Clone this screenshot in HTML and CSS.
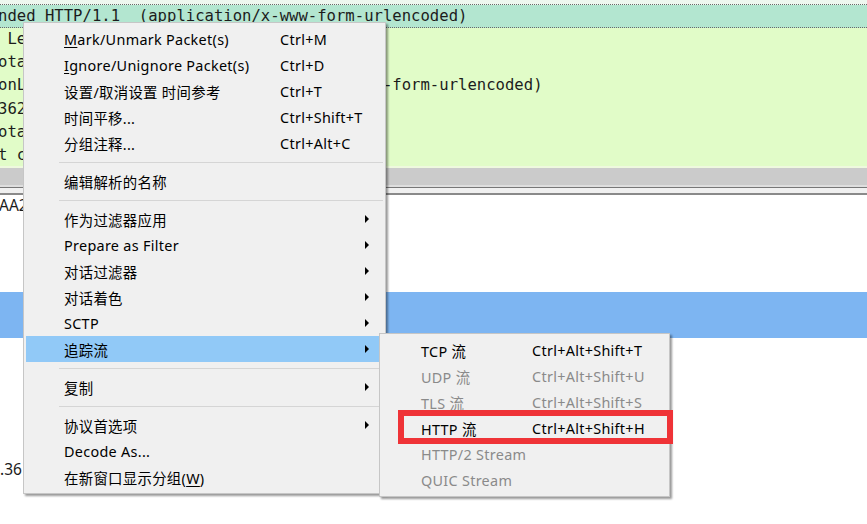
FILE: index.html
```html
<!DOCTYPE html>
<html>
<head>
<meta charset="utf-8">
<link rel="stylesheet" href="styles.css">
</head>
<body>
<div class="screen">
  <div class="details">
    <div class="cap"></div>
    <div class="row sel">nded HTTP/1.1  (application/x-www-form-urlencoded)</div>
    <div class="rows">
      <div class="row"> Length: 36</div>
      <div class="row">otal Length: 362</div>
      <div class="row">onLine-based text data: application/x-www-form-urlencoded)</div>
      <div class="row">362 bytes</div>
      <div class="row">otal bytes</div>
      <div class="row">t content</div>
    </div>
  </div>
  <div class="splitter">
    <div class="sp-bar"></div>
    <div class="sp-hi"></div>
    <div class="sp-line"></div>
    <div class="sp-gap"></div>
    <div class="sp-line2"></div>
  </div>
  <div class="bytes">
    <div class="bytes-text">AA2</div>
  </div>
  <div class="band"></div>
  <div class="lower">
    <div class="lower-text">.36</div>
  </div>

  <div class="menu">
    <div class="item"><span class="lbl"><u>M</u>ark/Unmark Packet(s)</span><span class="sc">Ctrl+M</span></div>
    <div class="item"><span class="lbl"><u>I</u>gnore/Unignore Packet(s)</span><span class="sc">Ctrl+D</span></div>
    <div class="item"><span class="lbl">设置/取消设置 时间参考</span><span class="sc">Ctrl+T</span></div>
    <div class="item"><span class="lbl">时间平移...</span><span class="sc">Ctrl+Shift+T</span></div>
    <div class="item"><span class="lbl">分组注释...</span><span class="sc">Ctrl+Alt+C</span></div>
    <div class="sep"></div>
    <div class="item"><span class="lbl">编辑解析的名称</span></div>
    <div class="sep"></div>
    <div class="item sub"><span class="lbl">作为过滤器应用</span></div>
    <div class="item sub"><span class="lbl">Prepare as Filter</span></div>
    <div class="item sub"><span class="lbl">对话过滤器</span></div>
    <div class="item sub"><span class="lbl">对话着色</span></div>
    <div class="item sub"><span class="lbl">SCTP</span></div>
    <div class="item sub hot"><span class="lbl">追踪流</span></div>
    <div class="sep"></div>
    <div class="item sub"><span class="lbl">复制</span></div>
    <div class="sep"></div>
    <div class="item sub"><span class="lbl">协议首选项</span></div>
    <div class="item"><span class="lbl">Decode As...</span></div>
    <div class="item"><span class="lbl">在新窗口显示分组(<u>W</u>)</span></div>
  </div>

  <div class="submenu">
    <div class="item"><span class="lbl2">TCP 流</span><span class="sc">Ctrl+Alt+Shift+T</span></div>
    <div class="item off"><span class="lbl2">UDP 流</span><span class="sc">Ctrl+Alt+Shift+U</span></div>
    <div class="item off"><span class="lbl2">TLS 流</span><span class="sc">Ctrl+Alt+Shift+S</span></div>
    <div class="item"><span class="lbl2">HTTP 流</span><span class="sc">Ctrl+Alt+Shift+H</span></div>
    <div class="item off"><span class="lbl2">HTTP/2 Stream</span></div>
    <div class="item off"><span class="lbl2">QUIC Stream</span></div>
  </div>

  <div class="redbox"></div>
</div>
</body>
</html>
```
FILE: styles.css
```css
* { box-sizing: border-box; }
html, body { margin: 0; padding: 0; }
body { width: 867px; height: 524px; overflow: hidden; background: #ffffff; }

.screen {
  position: relative;
  width: 867px;
  height: 524px;
  overflow: hidden;
  display: flex;
  flex-direction: column;
  font-family: "Noto Sans", "Noto Sans CJK SC", sans-serif;
}

.details {
  background: #e1fcc8;
  font-family: "DejaVu Sans Mono", monospace;
  font-size: 15.6px;
  color: #1c1c1c;
}
.cap { height: 5px; background: #eef7ef; border-bottom: 1px dotted #6a6a6a; }
.row { height: 23.2px; line-height: 23.2px; margin-left: -2px; white-space: pre; overflow: hidden; }
.row.sel {
  height: 23px;
  line-height: 22px;
  background: #b3e6d0;
  border-bottom: 1px dotted #6a6a6a;
}
.rows { height: 138px; overflow: hidden; }

.splitter { display: flex; flex-direction: column; }
.sp-bar { height: 2px; background: #eef9de; }
.sp-hi { height: 19px; background: #cbcbcb; border-bottom: 2px solid #dedede; }
.sp-line { height: 1px; background: #777777; }
.sp-gap { height: 5px; background: #f0f0f0; }
.sp-line2 { height: 2px; background: #8a8a8a; }

.bytes { height: 97px; background: #ffffff; }
.bytes-text { font-size: 15.5px; color: #1c1c1c; padding-top: 0; line-height: 20px; margin-left: -1px; }

.band { height: 46px; background: #7db5f2; }
.lower { flex: 1; background: #ffffff; }
.lower-text { font-size: 15.5px; color: #1c1c1c; padding-top: 121px; line-height: 20px; }

.menu, .submenu {
  position: absolute;
  background: #f0f0f0;
  border: 1px solid #c6c6c6;
  box-shadow: 2px 2px 2px rgba(0, 0, 0, 0.4);
  padding: 3px 2px;
  font-size: 14.4px;
  letter-spacing: 0.3px;
  color: #000000;
  display: flex;
  flex-direction: column;
}
.menu { left: 23px; top: 22px; width: 363px; }
.submenu { left: 379px; top: 333px; width: 291px; }

.item {
  position: relative;
  height: 26px;
  display: flex;
  align-items: center;
  padding-left: 38px;
  white-space: nowrap;
}
.submenu .item { padding-left: 39px; }
.lbl { width: 216px; }
.lbl2 { width: 111px; }
.item u { text-decoration: underline; text-underline-offset: 2px; }
.item.hot { background: #91c9f7; }
.item.off { color: #8a8a8a; }

.item.sub::after {
  content: "";
  position: absolute;
  right: 14px;
  top: 9px;
  width: 0;
  height: 0;
  border-left: 4px solid #000000;
  border-top: 4px solid transparent;
  border-bottom: 4px solid transparent;
}

.sep { height: 12px; display: flex; align-items: center; padding-left: 33px; }
.sep::before { content: ""; flex: 1; height: 1px; background: #d5d5d5; }

.redbox {
  position: absolute;
  left: 398px;
  top: 410px;
  width: 275px;
  height: 34px;
  border: 6px solid #ef3337;
}
```
